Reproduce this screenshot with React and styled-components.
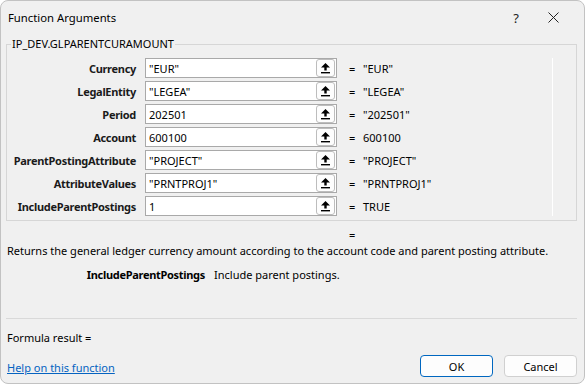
import React from "react";
import styled, { createGlobalStyle } from "styled-components";

const Global = createGlobalStyle`
  html, body { margin: 0; padding: 0; background: #ffffff; }
  body { font-family: "Noto Sans", "Open Sans", sans-serif; font-size: 11px; color: #000; }
  * { box-sizing: border-box; }
`;

const Window = styled.div`
  width: 585px;
  height: 384px;
  background: #f0f0f0;
  border: 1px solid #c2c2c2;
  border-radius: 8px;
  display: flex;
  flex-direction: column;
  overflow: hidden;
`;

const TitleBar = styled.div`
  height: 33px;
  display: flex;
  align-items: center;
  padding-left: 7px;
  padding-right: 5px;
  flex-shrink: 0;
`;

const Title = styled.div`
  flex: 1;
  font-size: 11.3px;
  color: #000;
`;

const TitleButton = styled.div`
  width: ${(p) => p.$w}px;
  height: 32px;
  display: flex;
  align-items: center;
  justify-content: center;
  font-size: 13px;
  color: #222;
`;

const Body = styled.div`
  flex: 1;
  display: flex;
  flex-direction: column;
  padding: 0 7px 0 5px;
`;

const Group = styled.fieldset`
  margin: 2px 0 0 0;
  padding: 6px 23px 4px 0;
  border: 1px solid #d6d6d6;
  min-width: 0;
`;

const Legend = styled.legend`
  padding: 0 1px;
  margin-left: 4px;
  line-height: 16px;
  color: #000;
`;

const Args = styled.div`
  display: grid;
  grid-template-columns: 138px 192px 19px 1fr;
  row-gap: 3px;
  border-right: 1px solid #ffffff;
  align-items: center;
`;

const Label = styled.div`
  text-align: right;
  font-weight: 700;
  letter-spacing: -0.3px;
  padding-right: 9px;
  color: #1a1a1a;
  white-space: nowrap;
`;

const Input = styled.div`
  height: 20px;
  border: 1px solid #a9a9a9;
  background: #fff;
  display: flex;
  align-items: center;
  padding: 0 1px 0 3px;
`;

const InputText = styled.span`
  flex: 1;
  white-space: nowrap;
  overflow: hidden;
`;

const RefButton = styled.div`
  width: 19px;
  height: 18px;
  border: 1px solid #bdbdbd;
  border-radius: 3px;
  background: #fdfdfd;
  display: flex;
  align-items: center;
  justify-content: center;
`;

const Eq = styled.div`
  padding-left: 12px;
`;

const Value = styled.div`
  padding-left: 7px;
  white-space: nowrap;
`;

const ResultEq = styled.div`
  margin-top: 6px;
  line-height: 16px;
  padding-left: 343px;
`;

const Desc = styled.div`
  line-height: 16px;
  padding-left: 1px;
  white-space: nowrap;
`;

const ParamHelp = styled.div`
  margin-top: 8px;
  line-height: 16px;
  display: flex;
  gap: 9px;
`;

const ParamName = styled.div`
  width: 199px;
  text-align: right;
  font-weight: 700;
  letter-spacing: -0.3px;
  white-space: nowrap;
`;

const Separator = styled.div`
  margin-top: 35px;
  height: 1px;
  background: #d9d9d9;
`;

const Result = styled.div`
  margin-top: 11px;
  line-height: 16px;
  padding-left: 1px;
`;

const Footer = styled.div`
  margin-top: 9px;
  display: flex;
  align-items: center;
`;

const HelpLink = styled.a`
  flex: 1;
  color: #0563c1;
  text-decoration: underline;
  padding-left: 1px;
  padding-top: 2px;
`;

const Button = styled.button`
  width: 73px;
  height: 22px;
  margin-left: ${(p) => p.$ml || 0}px;
  border: 1px solid ${(p) => (p.$primary ? "#0067c0" : "#d0d0d0")};
  border-radius: 4px;
  background: #fdfdfd;
  font-family: inherit;
  font-size: 11px;
  color: #000;
  padding: 0;
`;

const RefIcon = () => (
  <svg width="11" height="12" viewBox="0 0 11 12">
    <path d="M5.5 1 L1 5.5 L4.3 5.5 L4.3 8.5 L6.7 8.5 L6.7 5.5 L10 5.5 Z" fill="#000" />
    <rect x="1" y="10" width="9" height="1.4" fill="#000" />
  </svg>
);

const CloseIcon = () => (
  <svg width="11" height="11" viewBox="0 0 11 11">
    <path d="M0.5 0.5 L10.5 10.5 M10.5 0.5 L0.5 10.5" stroke="#222" strokeWidth="1" />
  </svg>
);

const rows = [
  ["Currency", '"EUR"', '"EUR"'],
  ["LegalEntity", '"LEGEA"', '"LEGEA"'],
  ["Period", "202501", '"202501"'],
  ["Account", "600100", "600100"],
  ["ParentPostingAttribute", '"PROJECT"', '"PROJECT"'],
  ["AttributeValues", '"PRNTPROJ1"', '"PRNTPROJ1"'],
  ["IncludeParentPostings", "1", "TRUE"],
];

export default function App() {
  return (
    <>
      <Global />
      <Window>
        <TitleBar>
          <Title>Function Arguments</Title>
          <TitleButton $w={22}>?</TitleButton>
          <TitleButton $w={52}>
            <CloseIcon />
          </TitleButton>
        </TitleBar>
        <Body>
          <Group>
            <Legend>IP_DEV.GLPARENTCURAMOUNT</Legend>
            <Args>
              {rows.map(([label, input, value]) => (
                <React.Fragment key={label}>
                  <Label>{label}</Label>
                  <Input>
                    <InputText>{input}</InputText>
                    <RefButton>
                      <RefIcon />
                    </RefButton>
                  </Input>
                  <Eq>=</Eq>
                  <Value>{value}</Value>
                </React.Fragment>
              ))}
            </Args>
          </Group>
          <ResultEq>=</ResultEq>
          <Desc>
            Returns the general ledger currency amount according to the account code and parent posting attribute.
          </Desc>
          <ParamHelp>
            <ParamName>IncludeParentPostings</ParamName>
            <span>Include parent postings.</span>
          </ParamHelp>
          <Separator />
          <Result>Formula result =</Result>
          <Footer>
            <HelpLink href="#">Help on this function</HelpLink>
            <Button $primary>OK</Button>
            <Button $ml={11}>Cancel</Button>
          </Footer>
        </Body>
      </Window>
    </>
  );
}
